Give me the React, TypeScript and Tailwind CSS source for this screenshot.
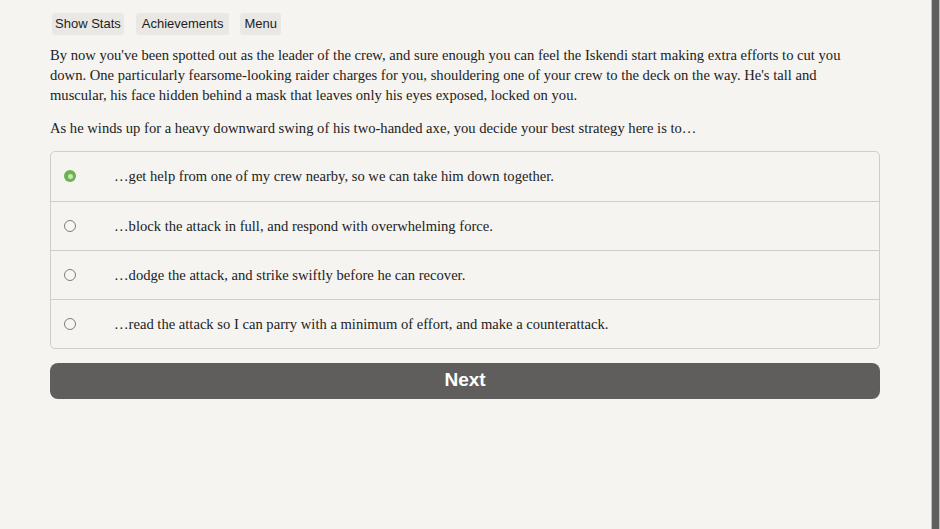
import { useState } from 'react';

const options = [
  '…get help from one of my crew nearby, so we can take him down together.',
  '…block the attack in full, and respond with overwhelming force.',
  '…dodge the attack, and strike swiftly before he can recover.',
  '…read the attack so I can parry with a minimum of effort, and make a counterattack.',
];

function Radio({ checked }: { checked: boolean }) {
  if (checked) {
    return (
      <span className="flex h-[12px] w-[12px] shrink-0 items-center justify-center rounded-full bg-[#6cb24f]">
        <span className="h-[5px] w-[5px] rounded-full bg-[#c9e4bc]" />
      </span>
    );
  }
  return <span className="h-[12px] w-[12px] shrink-0 rounded-full border-[1.5px] border-[#7d7d7b] bg-[#f7f6f3]" />;
}

export default function App() {
  const [selected, setSelected] = useState(0);

  return (
    <div className="flex h-[529px] w-full bg-[#f5f4f1]">
      <main className="flex-1 pl-[50px] pr-[51px] pt-[13px]">
        <nav className="ml-[2px] flex gap-[12px] font-['Liberation_Sans',sans-serif] text-[13px] text-[#1d1d1d]">
          <button className="rounded-[3px] bg-[#e9e8e5] px-[3px] py-[1px]">Show Stats</button>
          <button className="rounded-[3px] bg-[#e9e8e5] px-[6px] py-[1px]">Achievements</button>
          <button className="ml-[-1px] rounded-[3px] bg-[#e9e8e5] px-[4px] py-[1px]">Menu</button>
        </nav>

        <div className="mt-[10px] font-['Liberation_Serif',serif] text-[14.6px] leading-[20px] text-[#222]">
          <div className="pr-[12px]">
            <p>
              By now you've been spotted out as the leader of the crew, and sure enough you can feel the Iskendi start
              making extra efforts to cut you down. One particularly fearsome-looking raider charges for you,
              shouldering one of your crew to the deck on the way. He's tall and muscular, his face hidden behind a
              mask that leaves only his eyes exposed, locked on you.
            </p>
            <p className="mt-[13px]">
              As he winds up for a heavy downward swing of his two-handed axe, you decide your best strategy here is
              to…
            </p>
          </div>

          <div className="mt-[13px] overflow-hidden rounded-[5px] border border-[#cfcecb]">
            {options.map((o, i) => (
              <label
                key={o}
                onClick={() => setSelected(i)}
                className={`flex h-[49px] cursor-pointer items-center gap-[38px] pl-[13px] ${
                  i > 0 ? 'border-t border-[#cfcecb]' : ''
                }`}
              >
                <Radio checked={selected === i} />
                <span>{o}</span>
              </label>
            ))}
          </div>
        </div>

        <button className="mt-[14px] flex h-[36px] w-full items-center justify-center rounded-[8px] bg-[#5f5e5c] font-['Liberation_Sans',sans-serif] text-[19px] font-bold text-white">
          Next
        </button>
      </main>

      <div className="w-[9px] shrink-0 border-x border-[#bdbdbb] bg-[#5f5f5f]" />
    </div>
  );
}
